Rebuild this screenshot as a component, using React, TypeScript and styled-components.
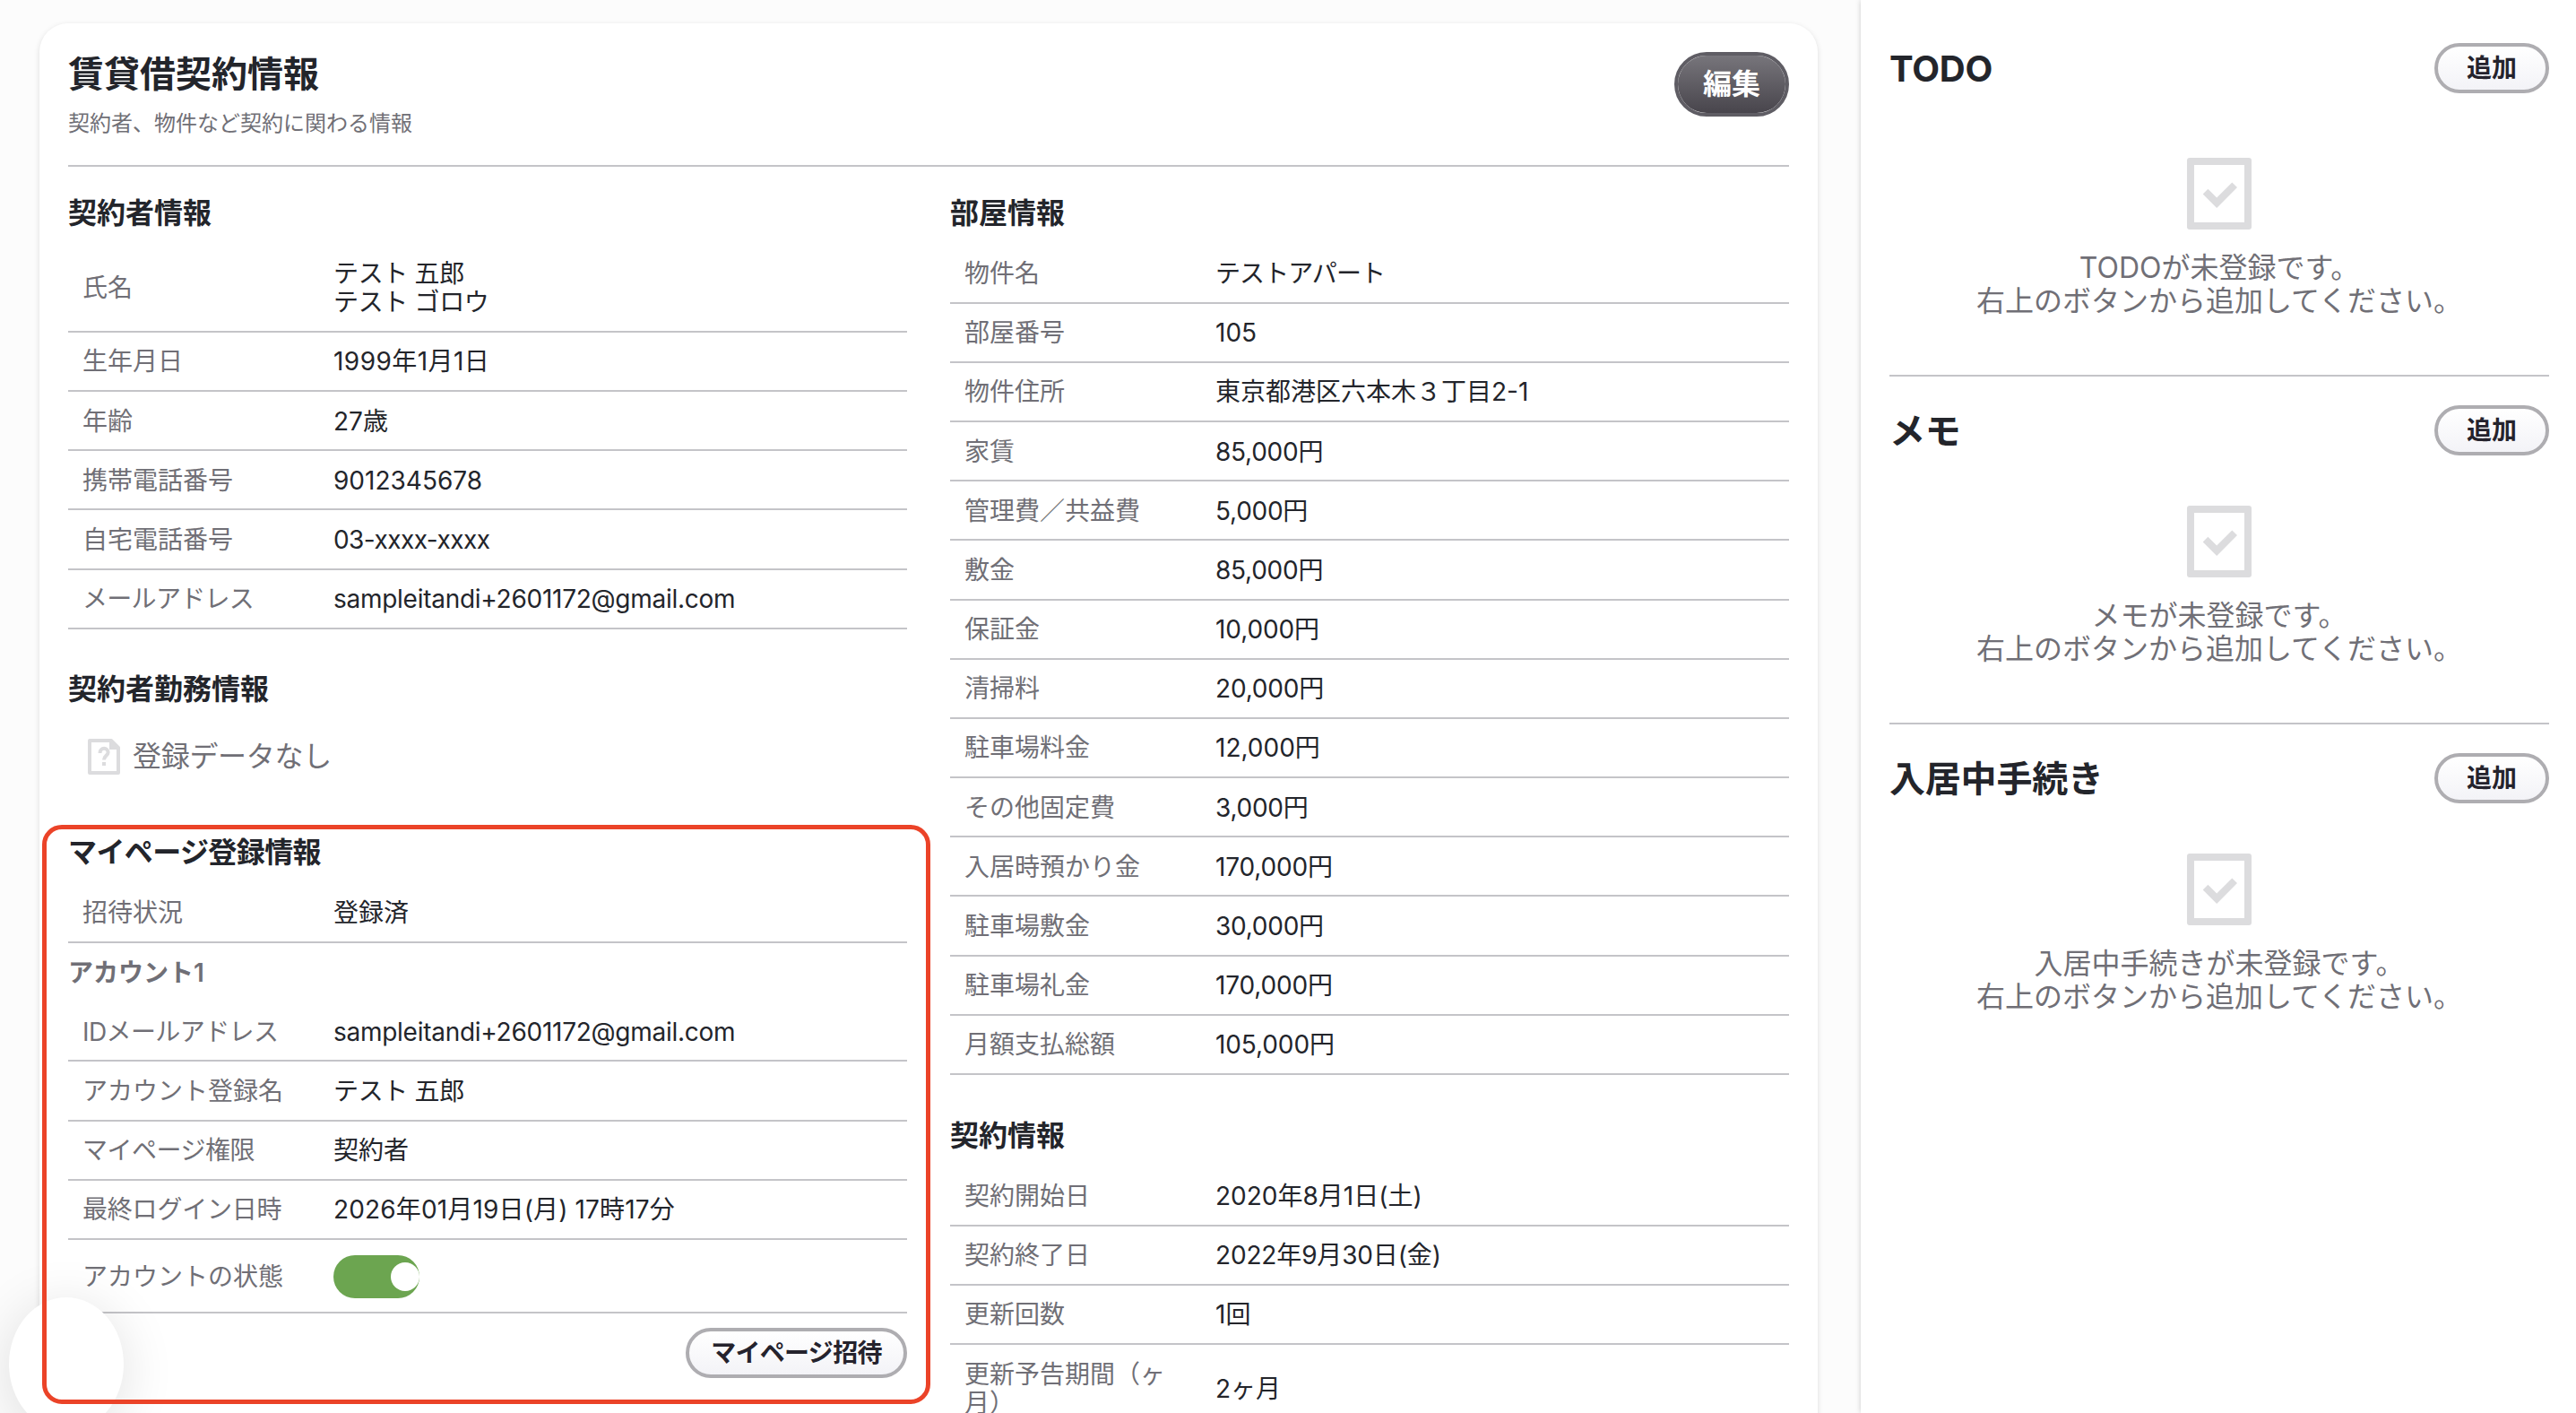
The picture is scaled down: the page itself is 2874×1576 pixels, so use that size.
import React from "react";
import styled, { createGlobalStyle } from "styled-components";

const GlobalStyle = createGlobalStyle`
  * { box-sizing: border-box; }
  html, body { margin: 0; padding: 0; }
  body {
    background: #fcfcfc;
    color: #23252b;
    font-family: Inter, "Noto Sans CJK JP", sans-serif;
    font-size: 28px;
    line-height: 32.2px;
    overflow: hidden;
  }
  h1, h2, h3, h4, p, dl, dt, dd { margin: 0; }
  button { font-family: inherit; }
`;

const Page = styled.div`
  position: relative;
  display: flex;
  justify-content: space-between;
  width: 2874px;
  height: 1576px;
  overflow: hidden;
`;

const Card = styled.main`
  width: 1984px;
  height: 1700px;
  margin: 26px 0 0 44px;
  padding: 32px;
  border-radius: 32px;
  background: #fff;
  box-shadow: 0 2px 6px rgba(0, 0, 0, 0.13);
`;

const CardHeader = styled.header`
  display: flex;
  justify-content: space-between;
  align-items: flex-start;
  height: 128px;
  border-bottom: 2px solid #c4c4c8;
`;

const Title = styled.h1`
  padding-top: 2px;
  font-size: 40px;
  line-height: 46px;
  font-weight: 700;
`;

const Lead = styled.p`
  margin-top: 18px;
  font-size: 24px;
  line-height: 28px;
  color: #706f76;
`;

const PrimaryButton = styled.button`
  width: 128px;
  height: 72px;
  padding: 0 0 1px;
  border: 4px solid #5f5d64;
  border-radius: 36px;
  background: linear-gradient(#77757b, #48454c) padding-box;
  color: #fff;
  font-size: 32px;
  line-height: 36px;
  font-weight: 700;
`;

const OutlineButton = styled.button<{ $width: number; $tracking?: number }>`
  flex: none;
  width: ${(p) => p.$width}px;
  height: 56px;
  padding: 0;
  border: 4px solid #aeadb1;
  border-radius: 28px;
  background: linear-gradient(#fff, #f3f3f7) padding-box;
  color: #25232d;
  font-size: 28px;
  line-height: 32px;
  font-weight: 700;
  letter-spacing: ${(p) => p.$tracking ?? 0}px;
  white-space: nowrap;
`;

const Columns = styled.div`
  display: grid;
  grid-template-columns: 936px 936px;
  column-gap: 48px;
  align-items: start;
`;

const Column = styled.div`
  display: flex;
  flex-direction: column;
`;

const Section = styled.section<{ $top: number }>`
  padding-top: ${(p) => p.$top}px;
`;

const SectionTitle = styled.h2<{ $tracking?: number }>`
  padding-top: 1.5px;
  font-size: 32px;
  line-height: 36.8px;
  font-weight: 700;
  letter-spacing: ${(p) => p.$tracking ?? 0}px;
`;

const Rows = styled.dl<{ $top: number }>`
  padding-top: ${(p) => p.$top}px;
`;

const Row = styled.div`
  display: grid;
  grid-template-columns: 264px 1fr;
  column-gap: 16px;
  align-items: center;
  padding: 16.6px 16px 15.4px;
  border-bottom: 2px solid #c4c4c8;
`;

const Label = styled.dt<{ $tracking?: number }>`
  width: 240px;
  color: #706f76;
  letter-spacing: ${(p) => p.$tracking ?? 0}px;
`;

const Value = styled.dd<{ $tracking?: number }>`
  white-space: pre-line;
  letter-spacing: ${(p) => p.$tracking ?? 0}px;
`;

const AccountTitle = styled.h3`
  padding: 17px 0 17px;
  font-size: 28px;
  line-height: 32.2px;
  font-weight: 600;
  color: #706f76;
`;

const EmptyInline = styled.div`
  display: flex;
  align-items: center;
  gap: 8px;
  height: 48px;
  margin: 31.9px 0 0 16px;
`;

const EmptyLabel = styled.p`
  padding-bottom: 1px;
  font-size: 32px;
  line-height: 37px;
  letter-spacing: -0.3px;
  color: #706f76;
`;

const Toggle = styled.button`
  display: flex;
  align-items: center;
  justify-content: flex-end;
  width: 96px;
  height: 48px;
  padding: 0;
  border: 0;
  border-radius: 24px;
  background: #6ca550;
`;

const ToggleKnob = styled.span`
  width: 32px;
  height: 32px;
  border-radius: 50%;
  background: #fff;
`;

const Actions = styled.div`
  display: flex;
  justify-content: flex-end;
  padding-top: 16px;
`;

const Aside = styled.aside`
  width: 798px;
  padding: 0 30px 0 32px;
  background: #fff;
  box-shadow: 0 0 6px rgba(0, 0, 0, 0.2);
`;

const Panel = styled.section<{ $first: boolean; $last: boolean }>`
  height: ${(p) => (p.$first ? 420 : 388)}px;
  padding-top: ${(p) => (p.$first ? 48 : 32)}px;
  border-bottom: ${(p) => (p.$last ? "0" : "2px solid #c4c4c8")};
`;

const PanelHeader = styled.div`
  display: flex;
  align-items: center;
  justify-content: space-between;
  height: 56px;
`;

const PanelTitle = styled.h2`
  padding-top: 2px;
  font-size: 40px;
  line-height: 46px;
  font-weight: 700;
  letter-spacing: -0.2px;
`;

const PanelEmpty = styled.div<{ $top: number }>`
  display: flex;
  flex-direction: column;
  align-items: center;
  padding-top: ${(p) => p.$top}px;
`;

const EmptyText = styled.p`
  margin-top: 25px;
  font-size: 32px;
  line-height: 36.8px;
  text-align: center;
  color: #706f76;
`;

const Highlight = styled.div`
  position: absolute;
  left: 47px;
  top: 920px;
  width: 991px;
  height: 646px;
  border: 5px solid #eb4328;
  border-radius: 22px;
  pointer-events: none;
`;

const Bubble = styled.div`
  position: absolute;
  left: 10px;
  top: 1447px;
  width: 128px;
  height: 149px;
  border-radius: 50%;
  background: #fff;
  box-shadow: 0 8px 60px rgba(0, 0, 0, 0.12);
`;

interface Item {
  label: string;
  value: React.ReactNode;
  labelTracking?: number;
  tracking?: number;
}

const contractor: Item[] = [
  { label: "氏名", value: "テスト 五郎\nテスト ゴロウ", tracking: -0.35 },
  { label: "生年月日", value: "1999年1月1日", tracking: 0.45 },
  { label: "年齢", value: "27歳" },
  { label: "携帯電話番号", value: "9012345678" },
  { label: "自宅電話番号", value: "03-xxxx-xxxx", tracking: -0.55 },
  { label: "メールアドレス", value: "sampleitandi+2601172@gmail.com", labelTracking: -0.7, tracking: -0.27 },
];

const invitation: Item[] = [{ label: "招待状況", value: "登録済" }];

const account: Item[] = [
  { label: "IDメールアドレス", value: "sampleitandi+2601172@gmail.com", labelTracking: -0.6, tracking: -0.27 },
  { label: "アカウント登録名", value: "テスト 五郎", tracking: -0.35 },
  { label: "マイページ権限", value: "契約者", labelTracking: -0.5 },
  { label: "最終ログイン日時", value: "2026年01月19日(月) 17時17分", labelTracking: -0.2, tracking: 0.15 },
  {
    label: "アカウントの状態",
    value: (
      <Toggle role="switch" aria-checked="true">
        <ToggleKnob />
      </Toggle>
    ),
  },
];

const room: Item[] = [
  { label: "物件名", value: "テストアパート", tracking: -0.9 },
  { label: "部屋番号", value: "105" },
  { label: "物件住所", value: "東京都港区六本木３丁目2-1" },
  { label: "家賃", value: "85,000円", tracking: -0.25 },
  { label: "管理費／共益費", value: "5,000円", tracking: -0.25 },
  { label: "敷金", value: "85,000円", tracking: -0.25 },
  { label: "保証金", value: "10,000円", tracking: -0.1 },
  { label: "清掃料", value: "20,000円", tracking: -0.2 },
  { label: "駐車場料金", value: "12,000円" },
  { label: "その他固定費", value: "3,000円", tracking: -0.25 },
  { label: "入居時預かり金", value: "170,000円", tracking: -0.15 },
  { label: "駐車場敷金", value: "30,000円", tracking: -0.25 },
  { label: "駐車場礼金", value: "170,000円", tracking: -0.15 },
  { label: "月額支払総額", value: "105,000円", tracking: -0.1 },
];

const contract: Item[] = [
  { label: "契約開始日", value: "2020年8月1日(土)" },
  { label: "契約終了日", value: "2022年9月30日(金)", tracking: -0.15 },
  { label: "更新回数", value: "1回" },
  { label: "更新予告期間（ヶ月）", value: "2ヶ月" },
];

const panels = ["TODO", "メモ", "入居中手続き"];

function List({ items, top = 16.1 }: { items: Item[]; top?: number }) {
  return (
    <Rows $top={top}>
      {items.map((item) => (
        <Row key={item.label}>
          <Label $tracking={item.labelTracking}>{item.label}</Label>
          <Value $tracking={item.tracking}>{item.value}</Value>
        </Row>
      ))}
    </Rows>
  );
}

function CheckBoxIcon() {
  return (
    <svg width="72" height="80" viewBox="0 0 72 80" fill="#dcdcde">
      <path
        fillRule="evenodd"
        d="M3 0H69A3 3 0 0 1 72 3V77A3 3 0 0 1 69 80H3A3 3 0 0 1 0 77V3A3 3 0 0 1 3 0ZM8 8V72H64V8Z"
      />
      <path d="M17.7 40.5L23.4 34.7L33.2 44.5L50.3 27.4L56 33.1L33.2 55.9Z" />
    </svg>
  );
}

function UnknownFileIcon() {
  return (
    <svg width="48" height="48" viewBox="0 0 48 48" fill="none">
      <path d="M8 6H32L40 14V42H8Z" stroke="#dcdcde" strokeWidth="4" strokeLinejoin="round" />
      <path d="M30 4H32L42 14V16H30Z" fill="#dcdcde" />
      <path d="M19.6 20V19.3A4.5 4.5 0 0 1 28.6 19.3C28.6 22.6 24 23.2 24 27.5" stroke="#dcdcde" strokeWidth="4" />
      <rect x="22" y="30" width="4" height="4" fill="#dcdcde" />
    </svg>
  );
}

export default function App() {
  return (
    <>
      <GlobalStyle />
      <Page>
        <Card>
          <CardHeader>
            <div>
              <Title>賃貸借契約情報</Title>
              <Lead>契約者、物件など契約に関わる情報</Lead>
            </div>
            <PrimaryButton>編集</PrimaryButton>
          </CardHeader>
          <Columns>
            <Column>
              <Section $top={32}>
                <SectionTitle>契約者情報</SectionTitle>
                <List items={contractor} />
              </Section>
              <Section $top={48}>
                <SectionTitle>契約者勤務情報</SectionTitle>
                <EmptyInline>
                  <UnknownFileIcon />
                  <EmptyLabel>登録データなし</EmptyLabel>
                </EmptyInline>
              </Section>
              <Section $top={64}>
                <SectionTitle $tracking={-0.6}>マイページ登録情報</SectionTitle>
                <List items={invitation} top={15.7} />
                <AccountTitle>アカウント1</AccountTitle>
                <List items={account} top={0} />
                <Actions>
                  <OutlineButton $width={247} $tracking={-0.7}>
                    マイページ招待
                  </OutlineButton>
                </Actions>
              </Section>
            </Column>
            <Column>
              <Section $top={32}>
                <SectionTitle>部屋情報</SectionTitle>
                <List items={room} />
              </Section>
              <Section $top={48}>
                <SectionTitle>契約情報</SectionTitle>
                <List items={contract} />
              </Section>
            </Column>
          </Columns>
        </Card>
        <Aside>
          {panels.map((name, i) => (
            <Panel key={name} $first={i === 0} $last={i === panels.length - 1}>
              <PanelHeader>
                <PanelTitle>{name}</PanelTitle>
                <OutlineButton $width={128}>追加</OutlineButton>
              </PanelHeader>
              <PanelEmpty $top={i === 0 ? 72 : 56}>
                <CheckBoxIcon />
                <EmptyText>
                  {name}が未登録です。
                  <br />
                  右上のボタンから追加してください。
                </EmptyText>
              </PanelEmpty>
            </Panel>
          ))}
        </Aside>
        <Bubble />
        <Highlight />
      </Page>
    </>
  );
}
